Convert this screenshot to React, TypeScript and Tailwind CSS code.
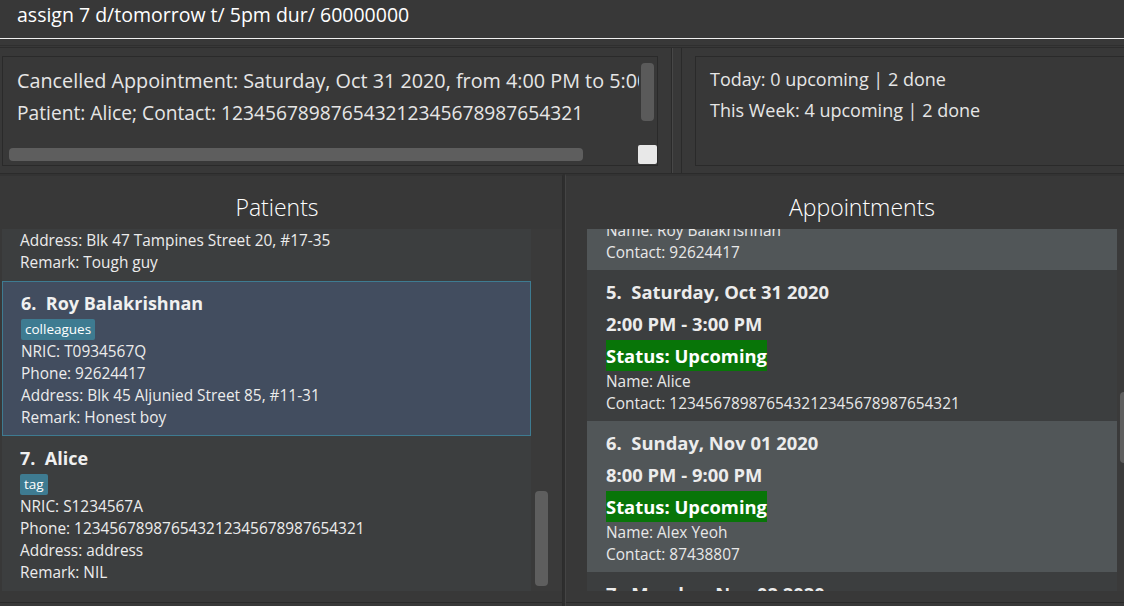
import React from "react";

type P = {
  idx: number;
  name: string;
  tag: string;
  nric: string;
  phone: string;
  address: string;
  remark: string;
  selected?: boolean;
  first?: boolean;
};

function PatientCard(p: P) {
  const base = p.selected
    ? "h-[155px] shrink-0 border border-[#3e7b91] bg-[#424d5f] pl-[18px] pt-[9px]"
    : "h-[155px] shrink-0 bg-[#3c3e3f] pl-[18px] pt-[10px]";
  return (
    <div className={p.first ? base + " mt-[-103px]" : base}>
      <div className="whitespace-pre text-[18px] font-bold leading-[24px] text-[#f0f0f0]">
        {p.idx}.  {p.name}
      </div>
      <div className="mt-[4px] flex">
        <span className="h-[21px] rounded-[2px] bg-[#3e7b91] px-[4px] text-[13.5px] leading-[21px] text-white">
          {p.tag}
        </span>
      </div>
      <div className="mt-[1px] text-[15.4px] leading-[22px] text-[#ececec]">
        <div>NRIC: {p.nric}</div>
        <div>Phone: {p.phone}</div>
        <div>Address: {p.address}</div>
        <div>Remark: {p.remark}</div>
      </div>
    </div>
  );
}

type A = {
  idx: number;
  date: string;
  time: string;
  name: string;
  contact: string;
  odd: boolean;
  first?: boolean;
};

function ApptCard(a: A) {
  const base = a.odd
    ? "h-[151px] shrink-0 bg-[#515658] pl-[19px] pt-[10px]"
    : "h-[151px] shrink-0 bg-[#3c3e3f] pl-[19px] pt-[10px]";
  return (
    <div className={a.first ? base + " mt-[-110px]" : base}>
      <div className="whitespace-pre text-[18.4px] font-bold leading-[24px] text-[#ececec]">
        {a.idx}.  {a.date}
      </div>
      <div className="mt-[8px] text-[18.4px] font-bold leading-[24px] text-[#ececec]">{a.time}</div>
      <div className="mt-[4px] flex">
        <span className="h-[31px] bg-[#087508] text-[18.4px] font-bold leading-[31px] text-white">
          Status: Upcoming
        </span>
      </div>
      <div className="text-[15.4px] leading-[22px] text-[#e8e8e8]">
        <div>Name: {a.name}</div>
        <div>Contact: {a.contact}</div>
      </div>
    </div>
  );
}

export default function App() {
  return (
    <div className="flex h-[606px] w-[1124px] flex-col overflow-hidden bg-[#383838] font-['Open_Sans',sans-serif]">
      {/* Command box */}
      <div className="h-[39px] shrink-0 border-b border-[#f0f0f0] pl-[17px] pt-[1px] text-[19.5px] leading-[28px] text-white">
        assign 7 d/tomorrow t/ 5pm dur/ 60000000
      </div>

      {/* Result + stats */}
      <div className="flex h-[134px] shrink-0 flex-col bg-[#383838]">
        <div className="mt-[6px] h-px shrink-0 bg-[#2f2f2f]" />
        <div className="mt-[1px] flex flex-1 border-t border-[#2c2c2c]">
          {/* Result pane */}
          <div className="w-[672px] shrink-0 border-r border-[#2a2a2a] pl-[2px] pt-[8px]">
            <div className="relative h-[110px] w-[656px] overflow-hidden border border-[#2a2a2a] bg-[#383838]">
              <div className="h-full w-[636px] overflow-hidden whitespace-nowrap pl-[14px] pt-[8px] leading-[32px] text-[#e6e6e6]">
                <div className="text-[19.8px]">Cancelled Appointment: Saturday, Oct 31 2020, from 4:00 PM to 5:00 PM</div>
                <div className="text-[19.2px]">Patient: Alice; Contact: 123456789876543212345678987654321</div>
              </div>
              <div className="absolute left-[638px] top-[6px] h-[58px] w-[13px] rounded-[4px] bg-[#5a5a5a]" />
              <div className="absolute left-[6px] top-[91px] h-[13px] w-[574px] rounded-[4px] bg-[#5e5e5e]" />
              <div className="absolute left-[635px] top-[88px] h-[19px] w-[19px] rounded-[2px] bg-[#e8e8e8]" />
            </div>
          </div>
          <div className="w-px shrink-0 bg-[#474747]" />
          {/* Stats pane */}
          <div className="ml-[8px] flex-1 border-l border-[#2a2a2a] pl-[13px] pt-[8px]">
            <div className="h-[110px] border border-r-0 border-[#2a2a2a] pl-[14px] pt-[7px] text-[18px] leading-[31px] text-[#e6e6e6]">
              <div>Today: 0 upcoming | 2 done</div>
              <div>This Week: 4 upcoming | 2 done</div>
            </div>
          </div>
        </div>
      </div>

      {/* Lower panels */}
      <div className="flex flex-1 border-t border-[#2b2b2b]">
        {/* Patients */}
        <div className="flex w-[563px] shrink-0 flex-col border-r border-t-2 border-[#333333] border-r-[#2c2c2c]">
          <div className="h-[53px] shrink-0 pr-[8px] pt-[15px] text-center text-[23px] font-light leading-[32px] text-white">
            Patients
          </div>
          <div className="flex h-[362px] shrink-0">
            <div className="ml-[2px] flex w-[529px] flex-col overflow-hidden">
              <PatientCard
                first
                idx={5}
                name="Irfan Ibrahim"
                tag="classmates"
                nric="S8765432B"
                phone="92492021"
                address="Blk 47 Tampines Street 20, #17-35"
                remark="Tough guy"
              />
              <PatientCard
                selected
                idx={6}
                name="Roy Balakrishnan"
                tag="colleagues"
                nric="T0934567Q"
                phone="92624417"
                address="Blk 45 Aljunied Street 85, #11-31"
                remark="Honest boy"
              />
              <PatientCard
                idx={7}
                name="Alice"
                tag="tag"
                nric="S1234567A"
                phone="123456789876543212345678987654321"
                address="address"
                remark="NIL"
              />
            </div>
            <div className="flex-1 bg-[#3a3a3a] pl-[4px] pt-[262px]">
              <div className="h-[95px] w-[13px] rounded-[4px] bg-[#5e5e5e]" />
            </div>
          </div>
          <div className="mt-[11px] h-px bg-[#2a2a2a]" />
        </div>
        <div className="w-[2px] shrink-0 bg-[#2e2e2e]" />
        {/* Appointments */}
        <div className="flex flex-1 flex-col border-l border-t-2 border-[#333333] border-l-[#444444]">
          <div className="h-[53px] shrink-0 pl-[28px] pt-[15px] text-center text-[23px] font-light leading-[32px] text-white">
            Appointments
          </div>
          <div className="flex h-[362px] shrink-0 pl-[21px]">
            <div className="flex w-[530px] flex-col overflow-hidden">
              <ApptCard
                first
                odd
                idx={4}
                date="Saturday, Oct 31 2020"
                time="10:00 AM - 11:00 AM"
                name="Roy Balakrishnan"
                contact="92624417"
              />
              <ApptCard
                odd={false}
                idx={5}
                date="Saturday, Oct 31 2020"
                time="2:00 PM - 3:00 PM"
                name="Alice"
                contact="123456789876543212345678987654321"
              />
              <ApptCard
                odd
                idx={6}
                date="Sunday, Nov 01 2020"
                time="8:00 PM - 9:00 PM"
                name="Alex Yeoh"
                contact="87438807"
              />
              <ApptCard
                odd={false}
                idx={7}
                date="Monday, Nov 02 2020"
                time="9:00 AM - 10:00 AM"
                name="Bernice Yu"
                contact="99272758"
              />
            </div>
            <div className="flex-1 bg-[#3a3a3a] pl-[3px] pt-[163px]">
              <div className="h-[71px] w-[10px] rounded-l-[4px] bg-[#5e5e5e]" />
            </div>
          </div>
          <div className="mt-[11px] h-px bg-[#2a2a2a]" />
        </div>
      </div>
    </div>
  );
}
